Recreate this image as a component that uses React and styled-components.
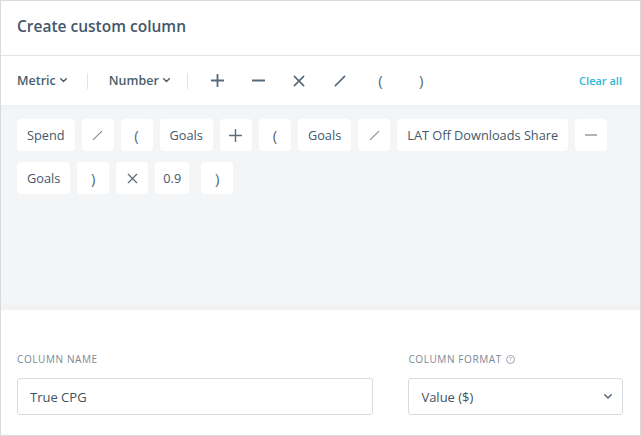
import React from "react";
import styled, { createGlobalStyle } from "styled-components";

const Global = createGlobalStyle`
  html, body { margin: 0; padding: 0; background: #fff; }
  body { font-family: "Open Sans", "Liberation Sans", sans-serif; -webkit-font-smoothing: antialiased; }
  * { box-sizing: border-box; }
`;

const Panel = styled.div`
  width: 641px;
  height: 436px;
  border: 1px solid #d9dadb;
  display: flex;
  flex-direction: column;
  background: #fff;
`;

const Header = styled.div`
  height: 55px;
  flex: none;
  border-bottom: 1px solid #e3e4e5;
  display: flex;
  align-items: center;
  padding: 0 16px 4px;
`;

const Title = styled.h1`
  margin: 0;
  font-size: 15.5px;
  font-weight: 600;
  color: #44576a;
  letter-spacing: 0;
`;

const Toolbar = styled.div`
  height: 49px;
  flex: none;
  display: flex;
  align-items: center;
  padding: 0 18px 0 16px;
`;

const Dropdown = styled.div`
  display: flex;
  align-items: center;
  gap: 4px;
  font-size: 12.5px;
  font-weight: 600;
  color: #4a5d6e;
  padding: ${(p) => p.$pad};
`;

const Sep = styled.div`
  width: 1px;
  height: 16px;
  background: #e1e3e5;
`;

const Ops = styled.div`
  display: flex;
  margin-left: 9px;
`;

const OpButton = styled.div`
  width: 40.8px;
  height: 24px;
  display: flex;
  align-items: center;
  justify-content: center;
  color: #56697a;
`;

const ClearAll = styled.div`
  margin-left: auto;
  font-size: 11px;
  font-weight: 600;
  color: #2cb7d6;
`;

const Canvas = styled.div`
  height: 205px;
  flex: none;
  background: linear-gradient(#eef0f2 0px, #f4f5f7 6px, #f4f5f7 196px, #eff1f3 205px);
  padding: 14px 16px;
  display: flex;
  flex-direction: column;
  gap: 11px;
`;

const TokenRow = styled.div`
  display: flex;
  gap: 7px;
`;

const Token = styled.div`
  height: 32px;
  min-width: 32px;
  padding: 0 ${(p) => (p.$op ? "0" : p.$tight ? "8px" : "10px")};
  background: #fff;
  border-radius: 4px;
  display: flex;
  align-items: center;
  justify-content: center;
  font-size: 12.75px;
  color: #44586a;
  margin-left: ${(p) => p.$ml || 0}px;
`;

const Paren = styled.span`
  font-size: 15px;
  line-height: 1;
  color: #56697a;
`;

const Bottom = styled.div`
  flex: 1;
  display: flex;
  gap: 35px;
  padding: 42px 17px 21px 16px;
  align-items: flex-end;
`;

const Field = styled.div`
  display: flex;
  flex-direction: column;
  gap: 12px;
  width: ${(p) => p.$w}px;
`;

const Label = styled.div`
  font-size: 10px;
  letter-spacing: 0.6px;
  color: #7b8894;
  text-transform: uppercase;
  display: flex;
  align-items: center;
  gap: 4px;
  line-height: 14px;
`;

const Help = styled.span`
  width: 9px;
  height: 9px;
  border: 1px solid #9aa5ae;
  border-radius: 50%;
  font-size: 6px;
  line-height: 7px;
  text-align: center;
  color: #8a96a0;
  letter-spacing: 0;
`;

const Box = styled.div`
  height: 37px;
  border: 1px solid #d7dce0;
  border-radius: 3px;
  display: flex;
  align-items: center;
  justify-content: space-between;
  padding: 0 10px 0 12px;
  font-size: 13px;
  color: #3f5263;
  background: #fff;
`;

const Chevron = ({ size = 7, color = "#4a5d6d" }) => (
  <svg width={size} height={size * 0.6} viewBox="0 0 10 6" fill="none">
    <path d="M1 1l4 4 4-4" stroke={color} strokeWidth="2" strokeLinecap="round" strokeLinejoin="round" />
  </svg>
);

const Icon = ({ kind, size = 13, color = "#56697a", w = 1.8 }) => {
  const paths = {
    plus: "M6.5 0.5v12M0.5 6.5h12",
    minus: "M0.5 6.5h12",
    times: "M1.5 1.5l10 10M11.5 1.5l-10 10",
    slash: "M1.5 11.5l10-10",
  };
  return (
    <svg width={size} height={size} viewBox="0 0 13 13" fill="none">
      <path d={paths[kind]} stroke={color} strokeWidth={w} strokeLinecap="round" />
    </svg>
  );
};

const row1 = [
  { t: "Spend" },
  { i: "slash" },
  { p: "(" },
  { t: "Goals" },
  { i: "plus" },
  { p: "(" },
  { t: "Goals" },
  { i: "slash" },
  { t: "LAT Off Downloads Share" },
  { i: "minus" },
];

const row2 = [
  { t: "Goals" },
  { p: ")" },
  { i: "times" },
  { t: "0.9", tight: true },
  { p: ")", ml: 5 },
];

const tokenIconProps = {
  slash: { size: 11, color: "#7d8b96", w: 1.3 },
  plus: { size: 13, color: "#5a6c7b", w: 1.4 },
  minus: { size: 12, color: "#5a6c7b", w: 1.3 },
  times: { size: 11, color: "#5a6c7b", w: 1.4 },
};

const renderToken = (tk, idx) => {
  if (tk.i)
    return (
      <Token key={idx} $op $ml={tk.ml}>
        <Icon kind={tk.i} {...tokenIconProps[tk.i]} />
      </Token>
    );
  if (tk.p)
    return (
      <Token key={idx} $op $ml={tk.ml}>
        <Paren>{tk.p}</Paren>
      </Token>
    );
  return (
    <Token key={idx} $ml={tk.ml} $tight={tk.tight}>
      {tk.t}
    </Token>
  );
};

export default function App() {
  return (
    <>
      <Global />
      <Panel>
        <Header>
          <Title>Create custom column</Title>
        </Header>
        <Toolbar>
          <Dropdown $pad="0 20px 0 0">
            Metric <Chevron />
          </Dropdown>
          <Sep />
          <Dropdown $pad="0 17px 0 21px">
            Number <Chevron />
          </Dropdown>
          <Sep />
          <Ops>
            <OpButton><Icon kind="plus" /></OpButton>
            <OpButton><Icon kind="minus" /></OpButton>
            <OpButton><Icon kind="times" size={12} /></OpButton>
            <OpButton><Icon kind="slash" size={12} /></OpButton>
            <OpButton><Paren>(</Paren></OpButton>
            <OpButton><Paren>)</Paren></OpButton>
          </Ops>
          <ClearAll>Clear all</ClearAll>
        </Toolbar>
        <Canvas>
          <TokenRow>{row1.map(renderToken)}</TokenRow>
          <TokenRow>{row2.map(renderToken)}</TokenRow>
        </Canvas>
        <Bottom>
          <Field $w={357}>
            <Label>Column name</Label>
            <Box>True CPG</Box>
          </Field>
          <Field $w={215}>
            <Label>
              Column format <Help>?</Help>
            </Label>
            <Box>
              Value ($)
              <Chevron size={8} color="#5a6c7b" />
            </Box>
          </Field>
        </Bottom>
      </Panel>
    </>
  );
}
